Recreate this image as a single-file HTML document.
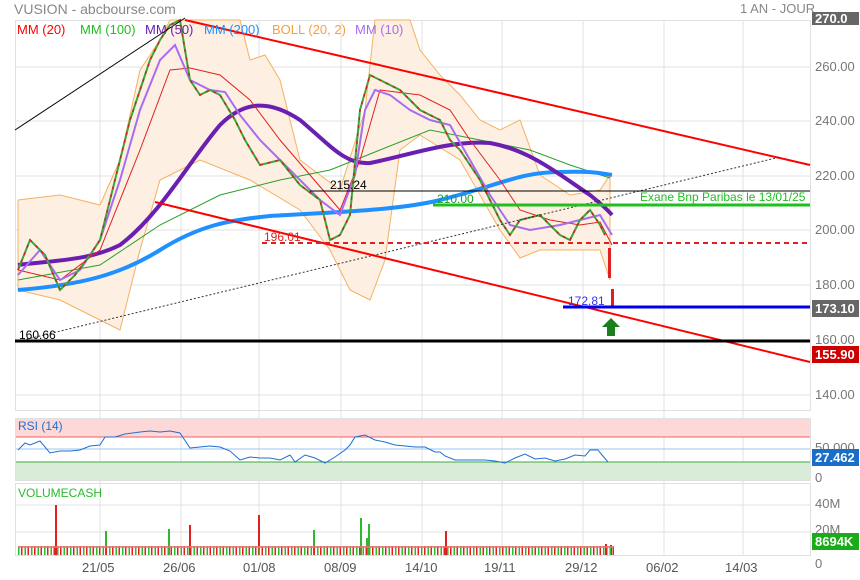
<!DOCTYPE html>
<html><head><meta charset="utf-8"><style>
body{margin:0;width:860px;height:580px;background:#fff;overflow:hidden;font-family:"Liberation Sans",sans-serif;position:relative}
.t{position:absolute;font-size:13px;white-space:nowrap}
.ax{position:absolute;left:815px;font-size:13px;color:#777}
.box{position:absolute;left:812px;width:47px;height:17px;color:#fff;font-size:13px;font-weight:bold;line-height:17px;padding-left:3px;box-sizing:border-box}
</style></head><body>
<div class="t" style="left:14px;top:1px;color:#888;font-size:14px">VUSION - abcbourse.com</div>
<div class="t" style="left:740px;top:1px;color:#888;font-size:13px">1 AN - JOUR</div>
<svg width="860" height="580" style="position:absolute;left:0;top:0">
<g stroke="#e0e0e0" stroke-width="1" fill="none">
<rect x="15.5" y="20.5" width="795" height="390"/>
<rect x="15.5" y="418.5" width="795" height="62"/>
<rect x="15.5" y="483.5" width="795" height="72"/>
<path d="M100 20V555M181 20V555M259 20V555M341 20V555M422 20V555M502 20V555M583 20V555M664 20V555M743 20V555"/>
<path d="M15 67H810M15 121H810M15 176H810M15 230H810M15 285H810M15 340H810M15 395H810M15 505H810M15 532H810"/>
</g>
<path d="M18 200L60 195L100 205L120 160L140 70L160 40L170 20L240 20L250 60L265 55L280 80L300 160L340 190L365 110L375 20L410 20L420 50L440 75L460 95L480 120L500 130L520 120L540 175L570 195L600 190L610 175L610 280L600 250L570 250L540 250L520 258L500 230L460 160L420 135L400 150L385 260L370 300L350 290L330 250L300 210L250 180L200 160L160 180L140 250L120 330L100 320L60 300L18 290Z" fill="#fdf0e2" stroke="#f5b060" stroke-width="1"/>
<polyline fill="none" stroke="#2aa02a" stroke-width="1" points="18,280 100,265 160,225 220,195 280,180 330,170 380,150 430,130 480,140 530,150 570,165 610,178"/>
<path fill="none" stroke="#1e90ff" stroke-width="4" d="M18 290C80 285 120 275 160 250C200 225 230 220 270 216C340 212 400 210 440 200C500 185 520 172 560 172C590 171 600 173 612 175"/>
<path fill="none" stroke="#6a1fb0" stroke-width="4" d="M18 265C60 260 90 260 120 245C160 215 190 160 220 125C245 100 270 100 300 120C330 145 345 165 370 163C410 155 450 140 490 143C530 150 560 175 590 195C600 203 606 208 612 215"/>
<polyline fill="none" stroke="#e02020" stroke-width="1" points="18,270 60,280 100,250 140,150 170,70 190,68 220,75 250,100 280,140 310,175 340,210 360,160 380,90 420,95 450,110 470,140 500,180 520,210 550,220 580,225 600,222 612,245"/>
<polyline fill="none" stroke="#a86cf0" stroke-width="2" points="18,275 40,250 60,280 80,270 100,240 120,180 140,110 160,60 175,45 190,80 210,90 225,92 240,115 260,140 280,160 300,180 320,200 340,215 355,175 365,110 375,90 390,95 410,110 430,120 450,125 470,160 490,195 510,225 530,230 560,225 580,220 600,215 612,235"/>
<polyline fill="none" stroke="#3aa83a" stroke-width="2" points="18,270 30,240 45,255 60,290 75,275 90,255 100,240 110,200 120,160 130,120 140,90 150,60 160,40 170,25 180,20 190,80 200,95 210,90 220,95 235,120 245,140 260,165 280,160 300,185 320,200 330,240 340,235 350,215 360,110 370,75 380,80 400,90 420,110 440,120 450,140 460,150 480,180 490,200 500,220 510,235 520,220 540,215 560,235 570,240 580,220 590,210 600,225 605,235"/>
<polyline fill="none" stroke="#d02020" stroke-width="1.5" stroke-dasharray="3 5" points="18,270 30,240 45,255 60,290 75,275 90,255 100,240 110,200 120,160 130,120 140,90 150,60 160,40 170,25 180,20 190,80 200,95 210,90 220,95 235,120 245,140 260,165 280,160 300,185 320,200 330,240 340,235 350,215 360,110 370,75 380,80 400,90 420,110 440,120 450,140 460,150 480,180 490,200 500,220 510,235 520,220 540,215 560,235 570,240 580,220 590,210 600,225 605,235"/>
<rect x="608" y="248" width="3" height="30" fill="#e02020"/>
<rect x="611" y="289" width="3" height="18" fill="#e02020"/>
<line x1="185" y1="20" x2="810" y2="165" stroke="#f00" stroke-width="2"/>
<line x1="155" y1="202" x2="810" y2="362" stroke="#f00" stroke-width="2"/>
<line x1="15" y1="130" x2="185" y2="18" stroke="#000" stroke-width="1"/>
<line x1="15" y1="342" x2="780" y2="157" stroke="#333" stroke-width="1" stroke-dasharray="2 2"/>
<line x1="310" y1="191" x2="810" y2="191" stroke="#000" stroke-width="1"/>
<line x1="433" y1="205" x2="810" y2="205" stroke="#1fbf1f" stroke-width="3"/>
<line x1="262" y1="243" x2="810" y2="243" stroke="#e02020" stroke-width="2" stroke-dasharray="5 4"/>
<line x1="563" y1="307" x2="810" y2="307" stroke="#0000ee" stroke-width="3"/>
<line x1="15" y1="341" x2="810" y2="341" stroke="#000" stroke-width="3"/>
<path d="M611 318L620 327H615V336H607V327H602Z" fill="#1a7f1a"/>
<text x="330" y="189" font-size="12" fill="#000">215.24</text>
<text x="437" y="203" font-size="12" fill="#1a9f1a">210.00</text>
<text x="640" y="201" font-size="12" fill="#1fbf1f">Exane Bnp Paribas le 13/01/25</text>
<text x="264" y="241" font-size="12" fill="#e02020">196.01</text>
<text x="568" y="305" font-size="12" fill="#3333ee">172.81</text>
<text x="19" y="339" font-size="12" fill="#000">160.66</text>
<rect x="16" y="419" width="794" height="18" fill="#fdd8d8"/>
<rect x="16" y="462" width="794" height="18" fill="#d8ecd8"/>
<line x1="16" y1="437" x2="810" y2="437" stroke="#f06060"/>
<line x1="16" y1="449" x2="810" y2="449" stroke="#9ac4f0"/>
<line x1="16" y1="462" x2="810" y2="462" stroke="#40a840"/>
<polyline fill="none" stroke="#1f6fd0" stroke-width="1" points="18,450 25,443 30,445 40,441 50,453 60,451 70,451 80,450 90,446 100,445 105,437 115,437 125,434 140,432 150,431 160,432 170,431 180,433 190,448 200,447 210,446 220,447 230,451 240,460 250,457 260,458 270,458 280,460 290,455 295,462 305,455 315,458 325,463 335,457 345,450 350,445 355,437 365,435 375,440 385,442 395,445 405,446 415,447 425,447 435,452 440,452 445,456 455,460 470,460 485,460 495,461 505,463 515,458 525,454 535,459 545,458 555,461 565,459 575,455 585,456 590,450 598,450 602,455 608,462"/>
<g fill="#e02020"><rect x="55" y="505" width="2" height="50"/><rect x="189" y="525" width="2" height="30"/><rect x="258" y="515" width="2" height="40"/><rect x="445" y="531" width="2" height="24"/><rect x="605" y="544" width="2" height="11"/><rect x="610" y="545" width="2" height="10"/></g>
<g fill="#2db82d"><rect x="105" y="531" width="2" height="24"/><rect x="168" y="529" width="2" height="26"/><rect x="313" y="530" width="2" height="25"/><rect x="360" y="518" width="2" height="37"/><rect x="368" y="524" width="2" height="31"/><rect x="366" y="538" width="2" height="17"/></g>
</svg>
<div style="position:absolute;left:18px;top:546px;width:596px;height:9px;background:repeating-linear-gradient(90deg,#2db82d 0 1.5px,transparent 1.5px 3px,#e02020 3px 4.5px,transparent 4.5px 6.5px)"></div>
<div style="position:absolute;left:18px;top:546px;width:596px;height:2px;background:#f07070;opacity:.8"></div>
<div class="t" style="left:17px;top:22px;color:#f00">MM (20)</div>
<div class="t" style="left:80px;top:22px;color:#1fbf1f">MM (100)</div>
<div class="t" style="left:145px;top:22px;color:#6a1fb0">MM (50)</div>
<div class="t" style="left:204px;top:22px;color:#1e90ff">MM (200)</div>
<div class="t" style="left:272px;top:22px;color:#f5a040">BOLL (20, 2)</div>
<div class="t" style="left:355px;top:22px;color:#a86cf0">MM (10)</div>
<div class="t" style="left:18px;top:419px;color:#1f6fd0;font-size:12px">RSI (14)</div>
<div class="t" style="left:18px;top:486px;color:#2db82d;font-size:12px">VOLUMECASH</div>
<div class="box" style="top:12px;height:13px;background:#666;line-height:13px">270.0</div>
<div class="ax" style="top:59px">260.00</div>
<div class="ax" style="top:113px">240.00</div>
<div class="ax" style="top:168px">220.00</div>
<div class="ax" style="top:222px">200.00</div>
<div class="ax" style="top:277px">180.00</div>
<div class="ax" style="top:332px">160.00</div>
<div class="ax" style="top:387px">140.00</div>
<div class="box" style="top:300px;background:#666">173.10</div>
<div class="box" style="top:346px;background:#c00">155.90</div>
<div class="ax" style="top:440px">50.000</div>
<div class="ax" style="top:470px">0</div>
<div class="box" style="top:449px;background:#1a6ec8">27.462</div>
<div class="ax" style="top:496px">40M</div>
<div class="ax" style="top:522px">20M</div>
<div class="ax" style="top:556px">0</div>
<div class="box" style="top:533px;background:#1aaa1a">8694K</div>
<div class="t" style="left:82px;top:560px;color:#555">21/05</div>
<div class="t" style="left:163px;top:560px;color:#555">26/06</div>
<div class="t" style="left:243px;top:560px;color:#555">01/08</div>
<div class="t" style="left:324px;top:560px;color:#555">08/09</div>
<div class="t" style="left:405px;top:560px;color:#555">14/10</div>
<div class="t" style="left:484px;top:560px;color:#555">19/11</div>
<div class="t" style="left:565px;top:560px;color:#555">29/12</div>
<div class="t" style="left:646px;top:560px;color:#555">06/02</div>
<div class="t" style="left:725px;top:560px;color:#555">14/03</div>
</body></html>
